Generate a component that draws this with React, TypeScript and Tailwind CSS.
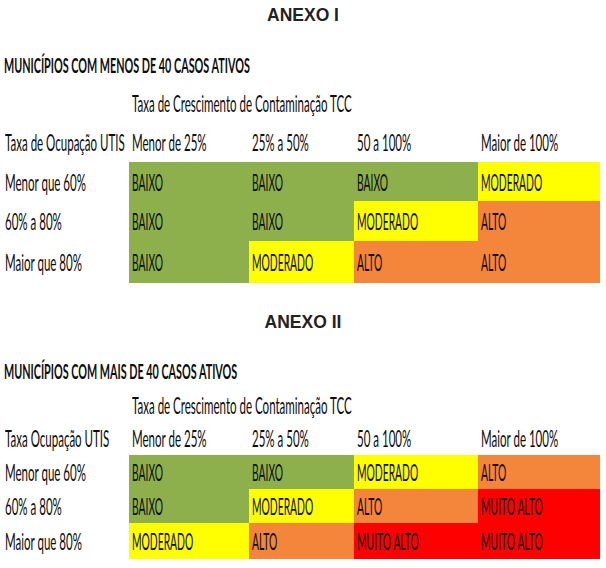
type Level = 'BAIXO' | 'MODERADO' | 'ALTO' | 'MUITO ALTO';

const levelBg: Record<Level, string> = {
  BAIXO: 'bg-[#8db04c]',
  MODERADO: 'bg-[#ffff00]',
  ALTO: 'bg-[#f4863b]',
  'MUITO ALTO': 'bg-[#ff0000]',
};

const columns = ['Menor de 25%', '25% a 50%', '50 a 100%', 'Maior de 100%'];
const rowLabels = ['Menor que 60%', '60% a 80%', 'Maior que 80%'];

const grid = 'grid grid-cols-[129px_120px_105px_124px_122px]';

const narrowStyles = {
  text: 'scale-x-[0.48] text-[24px]',
  caps: 'scale-x-[0.43] text-[24px]',
  bold: 'scale-x-[0.54] text-[20px] font-bold',
};

// squeezed text, like the pasted spreadsheet picture
function Narrow({
  children,
  variant = 'text',
}: {
  children: React.ReactNode;
  variant?: keyof typeof narrowStyles;
}) {
  return (
    <span className={`inline-block origin-left whitespace-nowrap leading-none ${narrowStyles[variant]}`}>
      {children}
    </span>
  );
}

interface AnexoProps {
  title: string;
  heading: string;
  cornerLabel: string;
  rows: Level[][];
  rowHeights: string[];
  spacing: { heading: string; tcc: string; header: string; table: string };
}

function Anexo({ title, heading, cornerLabel, rows, rowHeights, spacing }: AnexoProps) {
  return (
    <section>
      <div className="flex h-[30px] items-center justify-center font-['Liberation_Sans',Arial,sans-serif] text-[17.5px] font-bold text-[#222]">
        {title}
      </div>

      <div className={`${spacing.heading} flex h-[28px] items-center pl-[4px]`}>
        <Narrow variant="bold">{heading}</Narrow>
      </div>

      <div className={`${spacing.tcc} ${grid} h-[28px] items-center`}>
        <div className="col-span-4 col-start-2 min-w-0 pl-[3px]">
          <Narrow>Taxa de Crescimento de Contaminação TCC</Narrow>
        </div>
      </div>

      <div className={`${spacing.header} ${grid} h-[28px] items-center`}>
        <div className="min-w-0 pl-[5px]">
          <Narrow>{cornerLabel}</Narrow>
        </div>
        {columns.map((col) => (
          <div key={col} className="min-w-0 pl-[3px]">
            <Narrow>{col}</Narrow>
          </div>
        ))}
      </div>

      <div className={spacing.table}>
        {rows.map((row, i) => (
          <div key={rowLabels[i]} className={`${grid} ${rowHeights[i]}`}>
            <div className="flex min-w-0 items-center pl-[5px]">
              <Narrow>{rowLabels[i]}</Narrow>
            </div>
            {row.map((level, j) => (
              <div key={j} className={`flex min-w-0 items-center pl-[3px] ${levelBg[level]}`}>
                <Narrow variant="caps">{level}</Narrow>
              </div>
            ))}
          </div>
        ))}
      </div>
    </section>
  );
}

export default function App() {
  return (
    <div className="h-[568px] w-[606px] overflow-hidden bg-white font-['Lato','Open_Sans',sans-serif] text-[#0d0d0d]">
      <Anexo
        title="ANEXO I"
        heading="MUNICÍPIOS COM MENOS DE 40 CASOS ATIVOS"
        cornerLabel="Taxa de Ocupação UTIS"
        rows={[
          ['BAIXO', 'BAIXO', 'BAIXO', 'MODERADO'],
          ['BAIXO', 'BAIXO', 'MODERADO', 'ALTO'],
          ['BAIXO', 'MODERADO', 'ALTO', 'ALTO'],
        ]}
        rowHeights={['h-[39px]', 'h-[40px]', 'h-[42px]']}
        spacing={{ heading: 'mt-[21px]', tcc: 'mt-[11px]', header: 'mt-[11px]', table: 'mt-[5px]' }}
      />
      <div className="mt-[24px]">
        <Anexo
          title="ANEXO II"
          heading="MUNICÍPIOS COM MAIS DE 40 CASOS ATIVOS"
          cornerLabel="Taxa Ocupação UTIS"
          rows={[
            ['BAIXO', 'BAIXO', 'MODERADO', 'ALTO'],
            ['BAIXO', 'MODERADO', 'ALTO', 'MUITO ALTO'],
            ['MODERADO', 'ALTO', 'MUITO ALTO', 'MUITO ALTO'],
          ]}
          rowHeights={['h-[34px]', 'h-[34px]', 'h-[36px]']}
          spacing={{ heading: 'mt-[20px]', tcc: 'mt-[7px]', header: 'mt-[5px]', table: 'mt-[2px]' }}
        />
      </div>
    </div>
  );
}
